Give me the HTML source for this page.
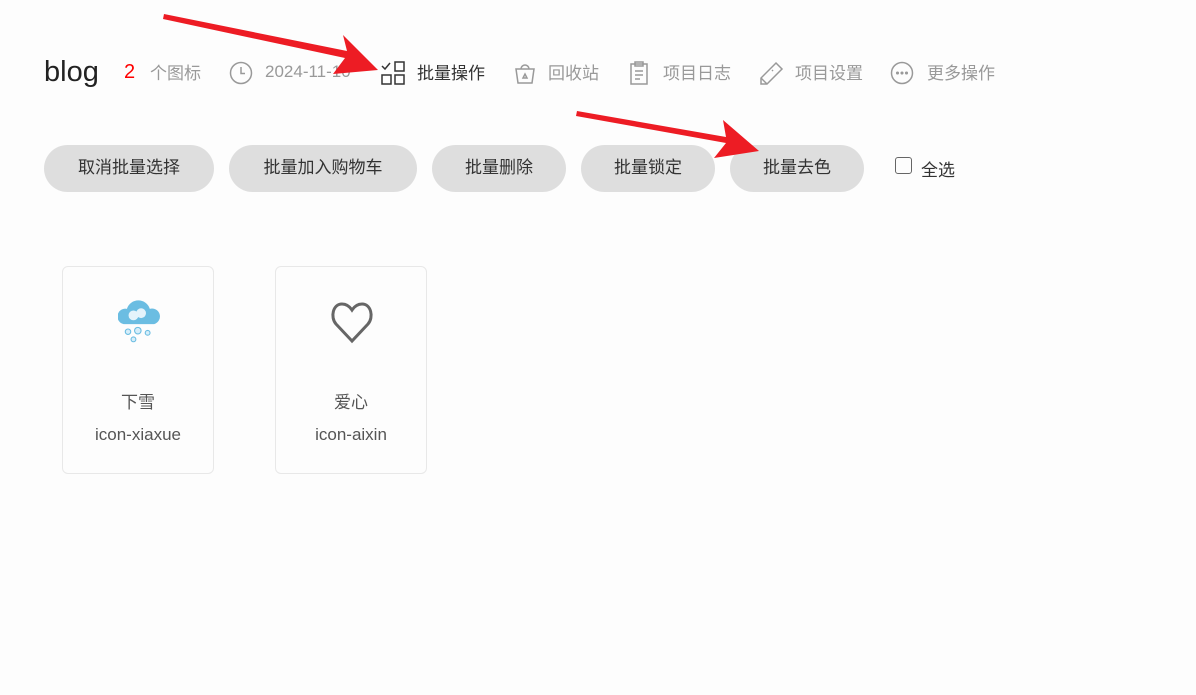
<!DOCTYPE html>
<html><head><meta charset="utf-8"><style>
body{margin:0;width:1196px;height:695px;background:#fdfdfd;font-family:"Liberation Sans","Noto Sans CJK SC",sans-serif;position:relative;overflow:hidden}
.a{position:absolute;white-space:nowrap}
.nav{font-size:17px;color:#999;top:59px}
.btn{position:absolute;top:145px;height:47px;border-radius:24px;background:#dedede;color:#333;font-size:17px;line-height:45px;text-align:center}
.card{position:absolute;top:266px;width:150px;height:206px;border:1px solid #e8e8e8;border-radius:6px;background:#fdfdfd;text-align:center;color:#555}
.card .n{position:absolute;top:121px;width:100%;font-size:17px}
.card .c{position:absolute;top:158px;width:100%;font-size:17px}
svg.i{position:absolute}
</style></head><body>
<div class="a" style="left:44px;top:56px;font-size:29px;color:#222">blog</div>
<div class="a" style="left:124px;top:61px;font-size:20px;color:#f00">2</div>
<div class="a nav" style="left:150px">个图标</div>
<svg class="i" style="left:229px;top:61px" width="24" height="24" viewBox="0 0 24 24" fill="none" stroke="#999" stroke-width="1.5"><circle cx="12" cy="12" r="10.5"/><path d="M12 6v6.5h4"/></svg>
<div class="a nav" style="left:265px;top:62px">2024-11-10</div>
<svg class="i" style="left:381px;top:61px" width="24" height="24" viewBox="0 0 24 24" fill="none" stroke="#333" stroke-width="1.5"><path d="M1 5l3 3 5-6"/><rect x="14" y="1" width="9" height="9"/><rect x="1" y="14" width="9" height="9"/><rect x="14" y="14" width="9" height="9"/></svg>
<div class="a nav" style="left:417px;color:#333">批量操作</div>
<svg class="i" style="left:514px;top:62px" width="22" height="22" viewBox="0 0 22 22" fill="none" stroke="#999" stroke-width="1.5"><path d="M2 7h18l-2 14H4z"/><path d="M7 7a4 4 0 0 1 8 0"/><path d="M9 16l2-4 2 4z"/></svg>
<div class="a nav" style="left:548px">回收站</div>
<svg class="i" style="left:629px;top:61px" width="20" height="24" viewBox="0 0 20 24" fill="none" stroke="#999" stroke-width="1.5"><rect x="2" y="3" width="16" height="20"/><rect x="6" y="1" width="8" height="4"/><path d="M6 10h8M6 14h8M6 18h5"/></svg>
<div class="a nav" style="left:663px">项目日志</div>
<svg class="i" style="left:758px;top:61px" width="26" height="26" viewBox="0 0 26 26" fill="none" stroke="#999" stroke-width="1.5"><path d="M18 2l6 6L9 23H3v-6z"/><path d="M3 17l6 6"/><path d="M14 10l1-1"/></svg>
<div class="a nav" style="left:795px">项目设置</div>
<svg class="i" style="left:890px;top:61px" width="24" height="24" viewBox="0 0 24 24" fill="none" stroke="#999" stroke-width="1.5"><circle cx="12" cy="12" r="10.5"/><circle cx="7.5" cy="12" r=".8" fill="#999"/><circle cx="12" cy="12" r=".8" fill="#999"/><circle cx="16.5" cy="12" r=".8" fill="#999"/></svg>
<div class="a nav" style="left:927px">更多操作</div>

<div class="btn" style="left:44px;width:170px">取消批量选择</div>
<div class="btn" style="left:229px;width:188px">批量加入购物车</div>
<div class="btn" style="left:432px;width:134px">批量删除</div>
<div class="btn" style="left:581px;width:134px">批量锁定</div>
<div class="btn" style="left:730px;width:134px">批量去色</div>
<div class="a" style="left:895px;top:157px;width:15px;height:15px;border:1.5px solid #666;border-radius:3px"></div>
<div class="a" style="left:921px;top:156px;font-size:17px;color:#333">全选</div>

<div class="card" style="left:62px">
<svg class="i" style="left:55px;top:32px" width="44" height="48" viewBox="0 0 40 44"><path d="M5 23a7 7 0 0 1 3-14 11 11 0 0 1 21 0 7 7 0 0 1 4 14z" fill="#6bbde2"/><circle cx="14" cy="15" r="4.5" fill="#e4f3fb"/><circle cx="21" cy="13" r="4.5" fill="#e4f3fb"/><g fill="#d6eefa" stroke="#6bbde2"><circle cx="9" cy="30" r="2.5"/><circle cx="18" cy="29" r="3"/><circle cx="27" cy="31" r="2.2"/><circle cx="14" cy="37" r="2.2"/></g></svg>
<div class="n">下雪</div><div class="c">icon-xiaxue</div></div>
<div class="card" style="left:275px">
<svg class="i" style="left:53px;top:32px" width="46" height="46" viewBox="0 0 46 46" fill="none" stroke="#666" stroke-width="3"><path d="M23 42L7 25C1 18 4 5 13 5c5 0 8 3 10 6 2-3 5-6 10-6 9 0 12 13 6 20z"/></svg>
<div class="n">爱心</div><div class="c">icon-aixin</div></div>

<svg class="i" style="left:0;top:0" width="1196" height="695"><polygon fill="#ed1c24" points="164,14 347,51 343,35 378,70 333,74 345,58 163,19"/><polygon fill="#ed1c24" points="577,111 726,137 723,120 759,151 714,158 726,143 576,116"/></svg>
</body></html>
